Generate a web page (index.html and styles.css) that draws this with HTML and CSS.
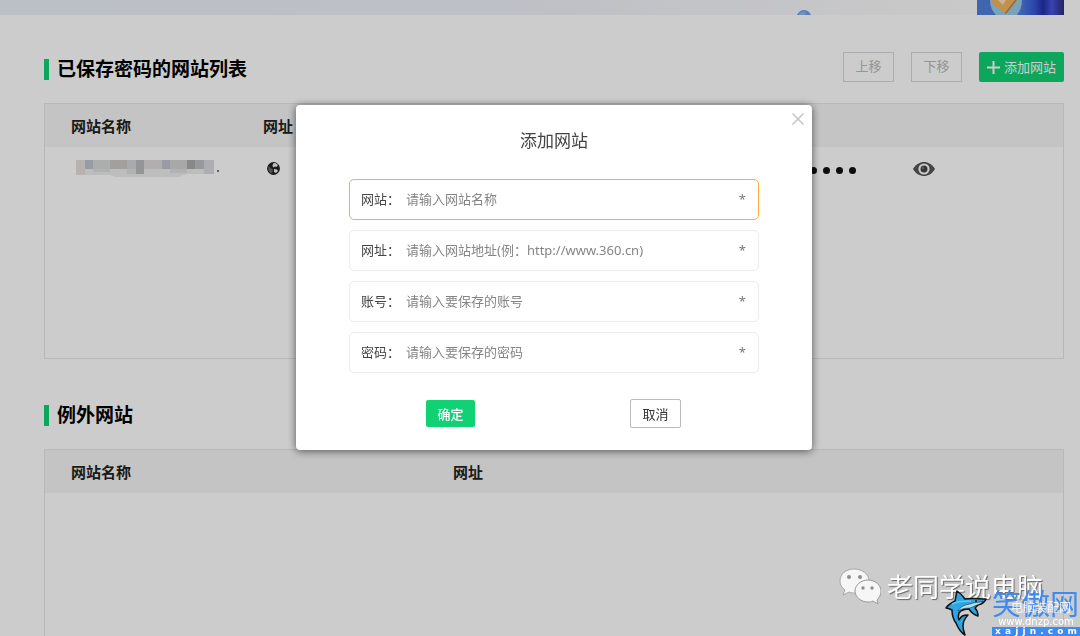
FILE: index.html
```html
<!DOCTYPE html>
<html lang="zh-CN">
<head>
    <meta charset="UTF-8">
    <meta name="viewport" content="width=device-width, initial-scale=1.0">
    <title>添加网站</title>
    <link rel="stylesheet" href="styles.css">
</head>
<body>
    <div class="banner">
        <svg class="banner-dot" width="14" height="5" viewBox="0 0 14 5">
            <path d="M0 5C1 2 4 0 7 0s6 2 7 5z" fill="#6f9fe8"/>
            <path d="M2 4C4 1 6 1 9 2L8 5H2z" fill="#8fb5ee"/>
        </svg>
        <svg class="banner-art" width="87" height="15" viewBox="0 0 87 15">
            <defs>
                <linearGradient id="art" x1="0" x2="1">
                    <stop offset="0" stop-color="#527fda"/>
                    <stop offset="0.5" stop-color="#4f80e0"/>
                    <stop offset="0.66" stop-color="#3658d8"/>
                    <stop offset="0.76" stop-color="#2430a8"/>
                    <stop offset="0.86" stop-color="#4854dc"/>
                    <stop offset="0.93" stop-color="#3c40a8"/>
                    <stop offset="1" stop-color="#282c80"/>
                </linearGradient>
            </defs>
            <rect width="87" height="15" fill="url(#art)"/>
            <path d="M13 0h32c0 6-2 11-5 15H19c-4-4-6-9-6-15z" fill="#9ccbe8"/>
            <path d="M14 0h24L28 13 17 5z" fill="#f4b45e"/>
            <path d="M21 0h8l-3 5z" fill="#f9e3bd"/>
            <path d="M28 13L38 0h2L29 14z" fill="#c98235"/>
        </svg>
    </div>

    <div class="page">
        <div class="section">
            <div class="section-head">
                <h2>已保存密码的网站列表</h2>
                <div class="tools">
                    <button type="button" class="btn-move" disabled>上移</button>
                    <button type="button" class="btn-move" disabled>下移</button>
                    <button type="button" class="btn-add">
                        <svg width="13" height="13" viewBox="0 0 13 13"><path d="M6.500 0v13M0 6.500h13" stroke="#fff" stroke-width="2"/></svg>
                        添加网站
                    </button>
                </div>
            </div>
            <div class="panel">
                <table class="saved">
                    <thead>
                        <tr>
                            <th class="col-name">网站名称</th>
                            <th class="col-url">网址</th>
                            <th class="col-account"></th>
                            <th class="col-pass"></th>
                            <th></th>
                        </tr>
                    </thead>
                    <tbody>
                        <tr>
                            <td>
                                <svg class="mosaic" width="148" height="17" viewBox="0 0 148 17">
                                    <path d="M5 0h138v14H118l-6 1-4 2H45l-6-2H5z" fill="#ededed"/>
                                    <path d="M5 0h9v9H5zM5 9h9v6H5z" fill="#e3dfdd"/>
                                    <path d="M14 0h8v9h-8z" fill="#bdc4cb"/>
                                    <path d="M22 0h17v9H22z" fill="#d8d9d9"/>
                                    <path d="M39 0h17v9H39z" fill="#cbc8c5"/>
                                    <path d="M56 0h9v9h-9z" fill="#d4d5d9"/>
                                    <path d="M65 0h8v14h-8z" fill="#b9bbbf"/>
                                    <path d="M73 0h18v9H73z" fill="#dcdada"/>
                                    <path d="M91 0h8v9h-8z" fill="#c0c2cc"/>
                                    <path d="M99 0h17v9H99z" fill="#d2d2d4"/>
                                    <path d="M116 0h8v9h-8z" fill="#a9aaac"/>
                                    <path d="M124 0h9v9h-9z" fill="#bfc0c3"/>
                                    <path d="M133 0h10v14h-10z" fill="#d9dae2"/>
                                    <path d="M22 9h17v3H22zM56 9h9v5h-9zM99 9h17v4H99z" fill="#dfdfe1"/>
                                    <path d="M146 10h2v2h-2z" fill="#777"/>
                                </svg>
                            </td>
                            <td>
                                <svg class="globe" width="13" height="13" viewBox="0 0 13 13">
                                    <circle cx="6.500" cy="6.500" r="6.400" fill="#222"/>
                                    <path d="M6 1.500l2.500-.5L11 3 9.500 5 8 4.500 6.500 5.500 5.500 4z" fill="#eee"/>
                                    <path d="M1.200 4l2.300 2 2.500 1.500L5.500 10 4 11.500 1.600 9z" fill="#666"/>
                                    <path d="M7 7l3 .5L11 9l-2 2L7 10z" fill="#eee"/>
                                </svg>
                            </td>
                            <td></td>
                            <td>
                                <div class="dots"><i></i><i></i><i></i><i></i><i></i><i></i><i></i><i></i></div>
                            </td>
                            <td>
                                <button type="button" class="eye" aria-label="显示密码">
                                    <svg width="22" height="14" viewBox="0 0 22 14">
                                        <path d="M0 7C3 2 7 0 11 0s8 2 11 7c-3 5-7 7-11 7S3 12 0 7z" fill="#555"/>
                                        <circle cx="11" cy="7" r="5.600" fill="#fff"/>
                                        <circle cx="11" cy="7" r="3.500" fill="#444"/>
                                        <circle cx="10" cy="6" r="1" fill="#888"/>
                                    </svg>
                                </button>
                            </td>
                        </tr>
                    </tbody>
                </table>
            </div>
        </div>

        <div class="section">
            <div class="section-head">
                <h2>例外网站</h2>
            </div>
            <div class="panel">
                <table>
                    <thead>
                        <tr>
                            <th class="col-except">网站名称</th>
                            <th>网址</th>
                        </tr>
                    </thead>
                </table>
            </div>
        </div>
    </div>

    <!-- 添加网站弹窗 -->
    <div class="overlay">
        <form class="dialog">
            <button type="button" class="close" aria-label="关闭">
                <svg width="12" height="12" viewBox="0 0 12 12"><path d="M.5.5l11 11M11.500.5l-11 11" stroke="#c4c4c4" stroke-width="1.500"/></svg>
            </button>
            <h3>添加网站</h3>
            <div class="fields">
                <div class="field active">
                    <label for="siteName">网站：</label>
                    <input type="text" id="siteName" placeholder="请输入网站名称">
                    <span>*</span>
                </div>
                <div class="field">
                    <label for="siteUrl">网址：</label>
                    <input type="text" id="siteUrl" placeholder="请输入网站地址(例：http://www.360.cn)">
                    <span>*</span>
                </div>
                <div class="field">
                    <label for="account">账号：</label>
                    <input type="text" id="account" placeholder="请输入要保存的账号">
                    <span>*</span>
                </div>
                <div class="field">
                    <label for="password">密码：</label>
                    <input type="password" id="password" placeholder="请输入要保存的密码">
                    <span>*</span>
                </div>
            </div>
            <div class="actions">
                <button type="submit" class="btn-ok">确定</button>
                <button type="button" class="btn-cancel">取消</button>
            </div>
        </form>
    </div>

    <div class="wechat">
        <svg width="42" height="38" viewBox="0 0 42 38">
            <path d="M15 1C7 1 1 6 1 13c0 4 2 7 5 9l-2 5 6-3c2 1 4 1 6 1 8 0 14-5 14-12S23 1 15 1z" fill="#f6f6f6" stroke="#999" stroke-width="0.800"/>
            <path d="M29 12c-7 0-13 5-13 11s6 11 13 11c2 0 3 0 5-1l5 3-1-4c2-2 4-5 4-9 0-6-6-11-13-11z" fill="#f6f6f6" stroke="#999"/>
            <g fill="#8d8d8d">
                <circle cx="10" cy="9" r="2"/>
                <circle cx="21" cy="9" r="2"/>
                <circle cx="24" cy="20" r="1.700"/>
                <circle cx="33" cy="20" r="1.700"/>
            </g>
        </svg>
        <span>老同学说电脑</span>
    </div>

    <div class="mark">
        <svg class="shark" width="42" height="46" viewBox="0 0 42 46">
            <path d="M1 18c2-3 5-5 9-7 1-4 1-7 2-10 3 2 6 5 8 8 7-1 14 0 21 0-1 3-4 5-8 6l-3 3c2 2 3 5 3 8-4-1-7-4-9-7-5 0-8 1-10 4-1 3-1 5 0 7 2-4 4-5 9-5-3 3-5 6-5 11 0 4 1 6 2 9-5-3-7-7-9-12-3-4-4-8-4-13-2-1-4-2-6-2z" fill="#2ba6e4" stroke="#111" stroke-width="1.500" stroke-linejoin="round"/>
            <path d="M38 11c-4 2-9 1-13 3-6 1-10 3-12 7 3-2 7-3 12-3l7-3c3-1 5-2 6-4z" fill="#b9e0f2" stroke="#111" stroke-width="0.500"/>
            <path d="M7 14c6-3 13-3 19-3" stroke="#5cc8f5" stroke-width="1.500" fill="none"/>
            <circle cx="31" cy="11" r="1" fill="#111"/>
        </svg>
        <div class="mark-text">
            <span class="mark-name">笑傲网</span>
            <span class="mark-small">电脑装配网</span>
            <span class="mark-url">www.dnzp.com</span>
            <div class="mark-bar"><b>x</b><b>a</b><b>j</b><b>j</b><b>n</b><b>.</b><b>c</b><b>o</b><b>m</b></div>
        </div>
    </div>
</body>
</html>
```
FILE: styles.css
```css
* {
    box-sizing: border-box;
}

body {
    margin: 0;
    height: 100vh;
    overflow: hidden;
    background-color: #fff;
    color: #444;
    font-family: "Noto Sans", "Noto Sans CJK SC", sans-serif;
    font-size: 13px;
    line-height: 20px;
}

button,
input {
    font-family: inherit;
    font-size: 13px;
    line-height: 20px;
}

svg {
    display: block;
    flex: none;
}

/* 顶部横幅 */
.banner {
    display: flex;
    justify-content: flex-end;
    align-items: flex-end;
    gap: 166px;
    height: 15px;
    padding-right: 16px;
    background: linear-gradient(to right, #eaeff8, #eef1f8 50%, #f9f9fb 80%, #fff);
}

.page {
    height: calc(100vh - 15px);
    overflow: hidden;
    padding: 37px 16px 0 44px;
}

.section {
    margin-bottom: 40px;
}

.section-head {
    display: flex;
    justify-content: space-between;
    align-items: flex-end;
    margin-bottom: 20px;
}

h2 {
    display: flex;
    align-items: center;
    gap: 8px;
    margin: 0;
    color: #000;
    font-size: 19px;
    line-height: 28px;
    padding-top: 2px;
}

h2::before {
    content: "";
    width: 5px;
    height: 21px;
    background-color: #10d173;
}

.tools {
    display: flex;
    gap: 17px;
    padding-bottom: 1px;
}

.btn-move {
    width: 51px;
    height: 30px;
    padding: 0 0 2px;
    border: 1px solid #d8d8d8;
    background-color: transparent;
    color: #bbb;
}

.btn-add {
    display: flex;
    align-items: center;
    gap: 4px;
    height: 30px;
    padding: 0 8px;
    border: none;
    border-radius: 2px;
    background-color: #10d173;
    color: #fff;
}

/* 列表 */
.panel {
    height: 256px;
    border: 1px solid #e6e6e6;
}

table {
    width: 100%;
    table-layout: fixed;
    border-collapse: collapse;
}

th {
    height: 43px;
    padding: 0 0 0 26px;
    background-color: #f5f5f5;
    color: #222;
    font-size: 15px;
    text-align: left;
}

td {
    height: 43px;
    padding: 0 0 0 26px;
}

.col-name {
    width: 192px;
}

.col-url {
    width: 245px;
}

.col-account {
    width: 250px;
}

.col-pass {
    width: 155px;
}

.col-except {
    width: 382px;
}

.globe {
    margin-left: 4px;
}

.dots {
    display: flex;
    gap: 6px;
    padding-top: 3px;
}

.dots i {
    width: 7px;
    height: 7px;
    border-radius: 50%;
    background-color: #111;
}

.eye {
    display: block;
    padding: 0;
    border: none;
    background: none;
}

/* 弹窗 */
.overlay {
    position: fixed;
    inset: 0;
    display: flex;
    justify-content: center;
    align-items: flex-start;
    padding: 105px 0 0 28px;
    background-color: rgba(0, 0, 0, 0.2);
}

.dialog {
    position: relative;
    width: 516px;
    padding: 24px 53px 22px;
    border-radius: 4px;
    background-color: #fff;
    box-shadow: 0 1px 8px rgba(0, 0, 0, 0.6);
}

.close {
    position: absolute;
    top: 8px;
    right: 8px;
    padding: 0;
    border: none;
    background: none;
}

h3 {
    margin: 0 0 26px;
    font-size: 17px;
    font-weight: normal;
    line-height: 24px;
    text-align: center;
}

.fields {
    display: flex;
    flex-direction: column;
    gap: 10px;
}

.field {
    display: flex;
    align-items: center;
    height: 41px;
    padding: 0 12px 2px 11px;
    border: 1px solid #ececec;
    border-radius: 5px;
}

.field.active {
    border-color: #ffa940;
}

.field label {
    width: 45px;
}

.field input {
    flex: 1;
    min-width: 0;
    padding: 0;
    border: none;
    outline: none;
    background: none;
}

.field input::placeholder {
    color: #858585;
}

.field span {
    color: #777;
}

.actions {
    display: flex;
    justify-content: space-between;
    align-items: center;
    margin-top: 26px;
    padding: 0 78px 0 77px;
}

.btn-ok {
    width: 49px;
    height: 27px;
    padding: 0;
    border: none;
    border-radius: 2px;
    background-color: #10d173;
    color: #fff;
    font-weight: 500;
}

.btn-cancel {
    width: 51px;
    height: 29px;
    padding: 0;
    border: 1px solid #bbb;
    border-radius: 2px;
    background-color: #fff;
    color: #333;
}

/* 右下角水印 */
.wechat {
    position: fixed;
    right: 37px;
    bottom: 30px;
    display: flex;
    align-items: center;
    gap: 6px;
    color: #fff;
    font-size: 26px;
    line-height: 38px;
    text-shadow: 1px 1px 1px #666;
}

.mark {
    position: fixed;
    right: 0;
    bottom: 0;
    display: flex;
    align-items: flex-end;
    gap: 5px;
}

.mark-text {
    width: 88px;
}

.mark-name,
.mark-url {
    display: block;
}

.mark-name {
    color: #3d8bf0;
    font-size: 29px;
    line-height: 26px;
}

.mark-small {
    position: absolute;
    right: 9px;
    bottom: 18px;
    color: #fff;
    font-size: 12px;
    opacity: 0.8;
}

.mark-url {
    color: #fff;
    font-family: "DejaVu Sans", sans-serif;
    font-size: 10px;
    line-height: 10px;
    text-align: center;
}

.mark-bar {
    display: flex;
    justify-content: space-between;
    padding: 0 3px;
    background-color: #3d8bf0;
    color: #fff;
    font-family: "DejaVu Sans", sans-serif;
    font-size: 9px;
    line-height: 9px;
}
```
